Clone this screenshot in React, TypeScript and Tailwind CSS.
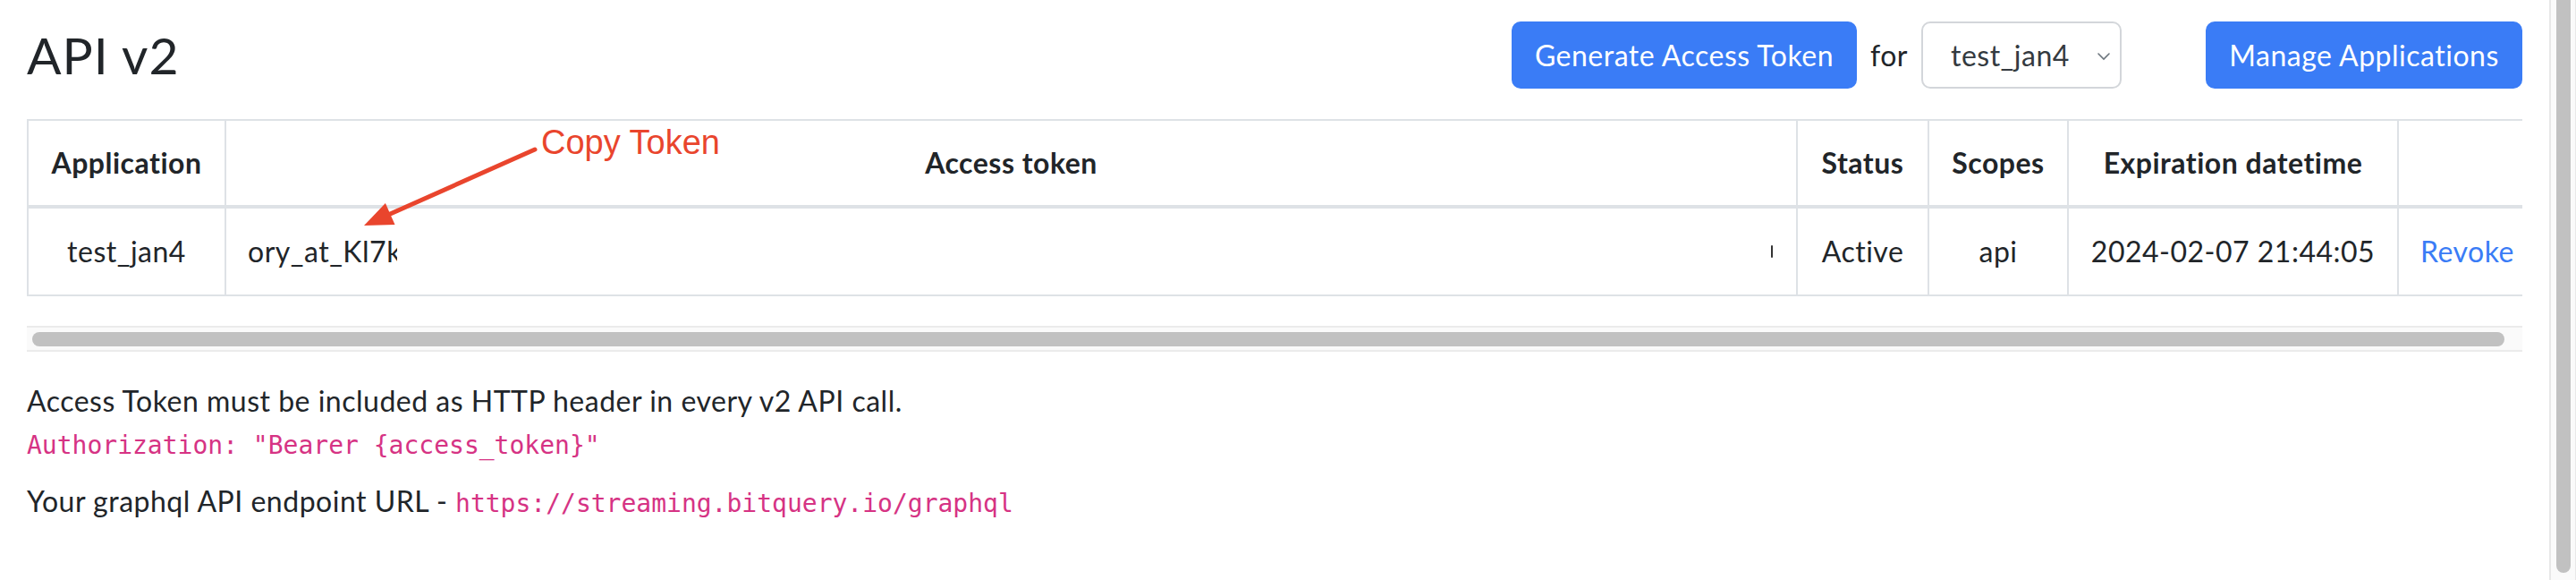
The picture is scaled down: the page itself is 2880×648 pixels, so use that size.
import React from "react";

const sans = "font-['Lato','Noto_Sans',sans-serif]";
const mono = "font-['DejaVu_Sans_Mono','Liberation_Mono',monospace]";

const cols = "grid grid-cols-[221px_1757px_147px_156px_369px_140px]";
const cell = "border-l-2 border-[#dee2e6] flex items-center";

export default function App() {
  return (
    <div className={`flex h-[648px] w-full overflow-hidden bg-white text-[#212529] ${sans}`}>
      {/* page */}
      <div className="relative flex-1 px-[30px] tracking-[0.5px]">
        {/* top bar */}
        <div className="flex items-center pt-[24px]">
          <h2 className="flex-1 text-[57px] leading-[75px] font-normal tracking-[1px]">API v2</h2>
          <button className="h-[75px] w-[386px] rounded-[10px] bg-[#3a7cf6] text-[32px] text-white">
            Generate Access Token
          </button>
          <span className="w-[72px] text-center text-[32px]">for</span>
          <div className="flex h-[75px] w-[224px] items-center justify-between rounded-[10px] border-2 border-[#d3d6da] bg-white pl-[31px] pr-[8px]">
            <span className="text-[32px] text-[#343a40]">test_jan4</span>
            <svg width="16" height="10" viewBox="0 0 16 10" className="mt-[2px] mr-[2px]">
              <path d="M2 2 L8 8 L14 2" fill="none" stroke="#6c757d" strokeWidth="1.6" strokeLinecap="round" />
            </svg>
          </div>
          <button className="ml-[94px] h-[75px] w-[354px] rounded-[10px] bg-[#3a7cf6] text-[32px] text-white">
            Manage Applications
          </button>
        </div>

        {/* table */}
        <div className="mt-[34px] border-t-2 border-[#dee2e6] text-[32px]">
          <div className={`${cols} h-[98px] border-b-4 border-[#dee2e6] font-bold`}>
            <div className={`${cell} justify-center`}>Application</div>
            <div className={`${cell} justify-center`}>Access token</div>
            <div className={`${cell} justify-center`}>Status</div>
            <div className={`${cell} justify-center`}>Scopes</div>
            <div className={`${cell} justify-center`}>Expiration datetime</div>
            <div className={cell}></div>
          </div>
          <div className={`${cols} h-[98px] border-b-2 border-[#dee2e6]`}>
            <div className={`${cell} justify-center`}>test_jan4</div>
            <div className={`${cell} justify-between pl-[24px] pr-[26px]`}>
              {/* token is partly hidden in the screenshot */}
              <span className="w-[167px] overflow-hidden whitespace-nowrap">ory_at_Kl7k</span>
              <span className="h-[14px] w-[2px] rounded-full bg-[#333]"></span>
            </div>
            <div className={`${cell} justify-center`}>Active</div>
            <div className={`${cell} justify-center`}>api</div>
            <div className={`${cell} justify-center`}>2024-02-07 21:44:05</div>
            <div className={`${cell} pl-[24px] text-[#3a7cf6]`}>Revoke</div>
          </div>
        </div>

        {/* horizontal scrollbar */}
        <div className="mt-[33px] flex h-[29px] items-center border-y-2 border-[#ebebeb] bg-[#fafafa] pl-[6px] pr-[20px]">
          <div className="h-[16px] flex-1 rounded-full bg-[#c1c1c1]"></div>
        </div>

        <p className="mt-[31px] text-[32px] leading-[48px]">
          Access Token must be included as HTTP header in every v2 API call.
        </p>
        <div className={`mt-[5px] text-[28px] leading-[42px] tracking-normal text-[#d63384] ${mono}`}>
          Authorization: "Bearer {"{access_token}"}"
        </div>
        <p className="mt-[17px] text-[32px] leading-[48px]">
          Your graphql API endpoint URL -{" "}
          <span className={`text-[28px] tracking-normal text-[#d63384] ${mono}`}>https://streaming.bitquery.io/graphql</span>
        </p>

        {/* annotation */}
        <span className="pointer-events-none absolute left-[605px] top-[140px] font-['Liberation_Sans',Arial,sans-serif] text-[38px] leading-none tracking-normal text-[#e9452d]">
          Copy Token
        </span>
        <svg className="pointer-events-none absolute left-0 top-0" width="2850" height="648">
          <line x1="598" y1="167" x2="434" y2="240" stroke="#e9452d" strokeWidth="5" strokeLinecap="round" />
          <polygon points="407,252 441.5,251 430.9,227" fill="#e9452d" />
        </svg>
      </div>

      {/* vertical scrollbar */}
      <div className="flex w-[30px] flex-col border-l-2 border-r border-[#e8e8e8] bg-[#fafafa] pl-[6px]">
        <div className="-mt-[10px] h-[650px] w-[16px] rounded-full bg-[#c1c1c1]"></div>
      </div>
    </div>
  );
}
